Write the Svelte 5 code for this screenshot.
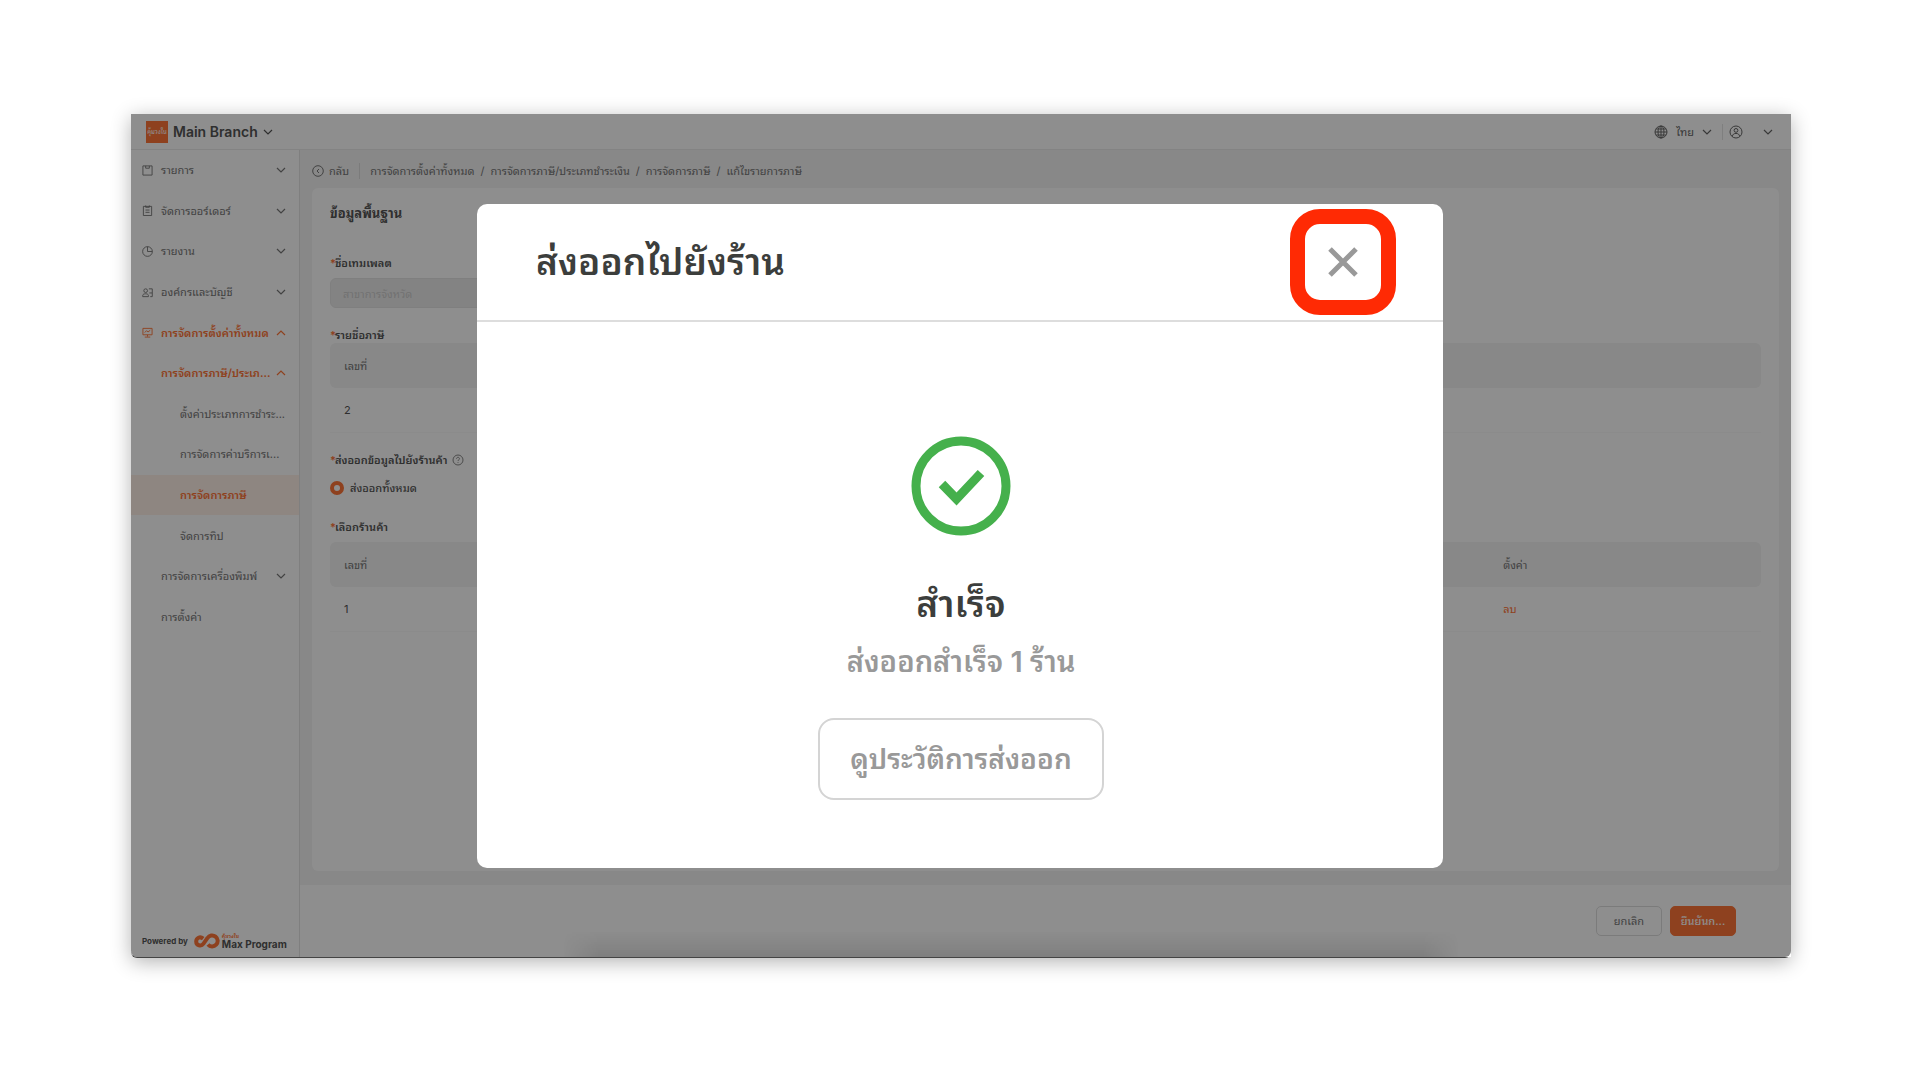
<script lang="ts">
  type MenuItem = {
    label: string;
    level: number;
    icon?: string;
    arrow?: 'up' | 'down';
    active?: boolean;
    selected?: boolean;
  };

  const menu: MenuItem[] = [
    { label: 'รายการ', level: 0, icon: 'bag', arrow: 'down' },
    { label: 'จัดการออร์เดอร์', level: 0, icon: 'order', arrow: 'down' },
    { label: 'รายงาน', level: 0, icon: 'report', arrow: 'down' },
    { label: 'องค์กรและบัญชี', level: 0, icon: 'people', arrow: 'down' },
    { label: 'การจัดการตั้งค่าทั้งหมด', level: 0, icon: 'board', arrow: 'up', active: true },
    { label: 'การจัดการภาษี/ประเภ...', level: 1, arrow: 'up', active: true },
    { label: 'ตั้งค่าประเภทการชำระ...', level: 2 },
    { label: 'การจัดการค่าบริการเ...', level: 2 },
    { label: 'การจัดการภาษี', level: 2, active: true, selected: true },
    { label: 'จัดการทิป', level: 2 },
    { label: 'การจัดการเครื่องพิมพ์', level: 1, arrow: 'down' },
    { label: 'การตั้งค่า', level: 1 }
  ];

  const crumbs = ['การจัดการตั้งค่าทั้งหมด', 'การจัดการภาษี/ประเภทชำระเงิน', 'การจัดการภาษี', 'แก้ไขรายการภาษี'];

  let scope = 'all';
</script>

{#snippet chevron(dir: string)}
  <svg class="chevron" class:up={dir === 'up'} viewBox="0 0 10 10" aria-hidden="true">
    <path d="M1 3l4 4 4-4" />
  </svg>
{/snippet}

<div class="page">
  <div class="window">
    <header class="topbar">
      <button class="branch">
        <span class="logo">คุ้มวงใน</span>
        Main Branch
        {@render chevron('down')}
      </button>
      <div class="account">
        <button class="lang">
          <svg viewBox="0 0 14 14" aria-hidden="true">
            <circle cx="7" cy="7" r="6" />
            <ellipse cx="7" cy="7" rx="3" ry="6" />
            <path d="M1 7h12M7 1v12M2 4h10M2 10h10" />
          </svg>
          ไทย
          {@render chevron('down')}
        </button>
        <button class="user" aria-label="บัญชี">
          <svg viewBox="0 0 14 14" aria-hidden="true">
            <circle cx="7" cy="7" r="6" />
            <circle cx="7" cy="5.4" r="1.9" />
            <path d="M3.4 11.4c0-4 7.2-4 7.2 0" />
          </svg>
          {@render chevron('down')}
        </button>
      </div>
    </header>

    <div class="columns">
      <aside class="sidebar">
        <nav>
          {#each menu as item}
            <a href="#menu" class="item level-{item.level}" class:active={item.active} class:selected={item.selected}>
              {#if item.icon}
                <svg class="menu-icon" viewBox="0 0 12 12" aria-hidden="true">
                  {#if item.icon === 'bag'}
                    <path d="M1 1h10v10H1zM4 1v2.500h4V1" />
                  {:else if item.icon === 'order'}
                    <path d="M1.500 1.500h9v10h-9zM4 .5v2h4v-2M3.800 5.500h4.400M3.800 8h4.400" />
                  {:else if item.icon === 'report'}
                    <circle cx="6" cy="6" r="5.300" />
                    <path d="M6 .7V6h5.300" />
                  {:else if item.icon === 'people'}
                    <circle cx="4" cy="4" r="2" />
                    <path d="M.8 10.500V9.200C.8 6.800 7 6.800 7 9.200v1.300zM7.500 2h3.700v8.500H9M8 6.500h3" />
                  {:else}
                    <path d="M1 1.500h10v7H1zM3 6l2-2 1.500 1.500L9 3.500M6 8.500v2M3 11h6" />
                  {/if}
                </svg>
              {/if}
              <span class="label">{item.label}</span>
              {#if item.arrow}{@render chevron(item.arrow)}{/if}
            </a>
          {/each}
        </nav>
        <div class="powered">
          <span>Powered by</span>
          <svg class="infinity" viewBox="0 0 26 16" aria-hidden="true">
            <path d="M9.200 5.600C6 3 2.200 5 2.200 8.400c0 4.200 5 5.300 7.300 2.200L13.500 5a5.500 5.500 0 1 1 .5 6.500" />
          </svg>
          <span class="brand"><small>คุ้มวงใน</small>Max Program</span>
        </div>
      </aside>

      <div class="content">
        <nav class="crumbs">
          <a href="#back" class="back">
            <svg viewBox="0 0 12 12" aria-hidden="true">
              <circle cx="6" cy="6" r="5.300" />
              <path d="M7 4L5 6l2 2" />
            </svg>
            กลับ
          </a>
          {#each crumbs as crumb, i}
            {#if i > 0}<span>/</span>{/if}
            <a href="#crumb">{crumb}</a>
          {/each}
        </nav>

        <main class="card">
          <h2>ข้อมูลพื้นฐาน</h2>

          <label class="field" for="template">ชื่อเทมเพลต</label>
          <input id="template" type="text" value="สาขาการจังหวัด" disabled />

          <p class="field taxes">รายชื่อภาษี</p>
          <table>
            <thead><tr><th>เลขที่</th></tr></thead>
            <tbody><tr><td>2</td></tr></tbody>
          </table>

          <p class="field export">
            ส่งออกข้อมูลไปยังร้านค้า
            <svg viewBox="0 0 12 12" aria-hidden="true">
              <circle cx="6" cy="6" r="5" />
              <path d="M4.500 4.800c0-2 3-2 3 0 0 1-1.500 1-1.500 2.200M6 8.200v.8" />
            </svg>
          </p>
          <label class="radio">
            <input type="radio" name="scope" value="all" bind:group={scope} />
            ส่งออกทั้งหมด
          </label>

          <p class="field shops">เลือกร้านค้า</p>
          <table>
            <thead><tr><th>เลขที่</th><th class="action">ตั้งค่า</th></tr></thead>
            <tbody><tr><td>1</td><td><a href="#remove">ลบ</a></td></tr></tbody>
          </table>
        </main>

        <footer>
          <button class="cancel">ยกเลิก</button>
          <button class="confirm">ยืนยันก...</button>
        </footer>
      </div>
    </div>

    <div class="overlay">
      <div class="modal" role="dialog" aria-modal="true" aria-labelledby="modal-title">
        <div class="modal-head">
          <h1 id="modal-title">ส่งออกไปยังร้าน</h1>
          <button class="close" aria-label="ปิด">
            <svg viewBox="0 0 30 30" aria-hidden="true"><path d="M2 2l26 26M28 2L2 28" /></svg>
          </button>
        </div>
        <div class="modal-body">
          <svg class="success" viewBox="0 0 100 100" aria-hidden="true">
            <circle cx="50" cy="50" r="45" />
            <path d="M31 48l14.500 15L70 37" />
          </svg>
          <h3>สำเร็จ</h3>
          <p>ส่งออกสำเร็จ 1 ร้าน</p>
          <button class="history">ดูประวัติการส่งออก</button>
        </div>
      </div>
    </div>
  </div>
</div>

<style>
  :global(body) {
    margin: 0;
    background: #fff;
  }

  .page {
    box-sizing: border-box;
    min-height: 100vh;
    padding: 114px 129px 122px 131px;
  }

  .window {
    position: relative;
    display: flex;
    flex-direction: column;
    box-sizing: border-box;
    min-height: calc(100vh - 236px);
    border-bottom: 1px solid #444;
    border-radius: 0 0 6px 6px;
    background: #fff;
    box-shadow: 0 4px 20px rgba(0, 0, 0, 0.3);
    color: #777;
    font-family: Inter, 'Noto Sans Thai Looped', Loma, Garuda, 'Noto Sans Thai', 'Noto Sans', sans-serif;
    font-size: 11px;
    line-height: 16px;
  }

  button,
  input {
    font: inherit;
    color: inherit;
  }

  button {
    padding: 0;
    border: 0;
    background: none;
  }

  a {
    color: inherit;
    text-decoration: none;
  }

  svg {
    flex: none;
    fill: none;
    stroke: currentColor;
  }

  h1,
  h2,
  h3,
  p {
    margin: 0;
  }

  .chevron {
    width: 10px;
    height: 10px;
    stroke-width: 1.2;
  }

  .chevron.up {
    transform: rotate(180deg);
  }

  .topbar {
    display: flex;
    align-items: center;
    justify-content: space-between;
    height: 35px;
    padding: 0 18px 0 15px;
    border-bottom: 1px solid #ececec;
    color: #666;
  }

  .branch {
    display: flex;
    align-items: center;
    gap: 5px;
    color: #555;
    font-size: 14px;
    font-weight: 600;
  }

  .logo {
    display: grid;
    width: 22px;
    height: 22px;
    place-items: center;
    overflow: hidden;
    background: #ff7638;
    color: #fff;
    font-size: 6px;
    font-weight: 400;
  }

  .account,
  .lang,
  .user {
    display: flex;
    align-items: center;
  }

  .account svg:not(.chevron) {
    width: 14px;
    height: 14px;
  }

  .lang {
    gap: 8px;
    padding-right: 10px;
    border-right: 1px solid #e4e4e4;
  }

  .user {
    gap: 20px;
    padding-left: 6px;
  }

  .columns {
    display: flex;
    flex: 1;
  }

  .sidebar {
    display: flex;
    flex: none;
    flex-direction: column;
    justify-content: space-between;
    width: 168px;
    border-right: 1px solid #e4e4e4;
  }

  .sidebar nav {
    display: grid;
    grid-template-columns: minmax(0, 1fr);
    grid-auto-rows: 1fr;
    height: 487px;
  }

  .item {
    display: flex;
    align-items: center;
    gap: 8px;
    padding: 0 13px 0 11px;
    white-space: nowrap;
  }

  .item.level-1 {
    padding-left: 30px;
  }

  .item.level-2 {
    padding-right: 0;
    padding-left: 49px;
  }

  .item.active {
    color: #ff7638;
    font-weight: 600;
  }

  .item.selected {
    background: #fff0e8;
  }

  .menu-icon {
    width: 11px;
    height: 11px;
  }

  .label {
    flex: 1;
    min-width: 0;
  }

  .powered {
    display: flex;
    align-items: center;
    gap: 6px;
    padding: 0 8px 8px 11px;
    color: #555;
    font-size: 8px;
    font-weight: 700;
    white-space: nowrap;
  }

  .infinity {
    width: 26px;
    height: 16px;
    color: #ff7638;
    stroke-width: 4;
  }

  .brand {
    display: flex;
    flex-direction: column;
    margin-left: -4px;
    font-size: 10px;
    line-height: 10px;
  }

  .brand small {
    color: #ff7638;
    font-size: 5px;
    line-height: 5px;
  }

  .content {
    display: flex;
    flex: 1;
    flex-direction: column;
    min-width: 0;
    background: #f4f4f4;
  }

  .crumbs {
    display: flex;
    align-items: center;
    gap: 6px;
    box-sizing: border-box;
    height: 38px;
    padding: 4px 12px 0;
  }

  .back {
    display: flex;
    align-items: center;
    gap: 5px;
    margin-right: 4px;
    padding-right: 10px;
    border-right: 1px solid #ddd;
  }

  .back svg {
    width: 12px;
    height: 12px;
  }

  .card {
    flex: 1;
    margin: 0 12px 14px;
    padding: 16px 18px;
    border-radius: 6px;
    background: #fff;
  }

  h2 {
    color: #555;
    font-size: 13px;
    font-weight: 700;
    line-height: 18px;
  }

  .field {
    display: flex;
    align-items: center;
    gap: 4px;
    height: 16px;
    margin-top: 33px;
    color: #555;
    font-weight: 600;
  }

  .field::before {
    margin-right: -5px;
    color: #ff7638;
    content: '*';
  }

  .field svg {
    width: 12px;
    height: 12px;
    color: #888;
  }

  .card input[type='text'] {
    display: block;
    box-sizing: border-box;
    width: 40%;
    height: 30px;
    margin-top: 7px;
    padding: 0 12px;
    border: 1px solid #e4e4e4;
    border-radius: 6px;
    background: #ececec;
    color: #ccc;
  }

  .field.taxes {
    margin-top: 19px;
  }

  .field.export {
    margin-top: 19px;
  }

  .field.shops {
    margin: 23px 0 7px;
  }

  table {
    width: 100%;
    border-collapse: separate;
    border-spacing: 0;
  }

  th,
  td {
    box-sizing: border-box;
    height: 45px;
    padding: 0 14px;
    text-align: left;
  }

  th {
    background: #f4f4f4;
    font-weight: 400;
  }

  th:first-child {
    border-radius: 6px 0 0 6px;
  }

  th:last-child {
    border-radius: 0 6px 6px 0;
  }

  th:only-child {
    border-radius: 6px;
  }

  .action {
    width: 19%;
  }

  td {
    border-bottom: 1px solid #f9f9f9;
    color: #555;
  }

  td a {
    color: #ff7638;
  }

  .radio {
    display: flex;
    align-items: center;
    gap: 6px;
    height: 16px;
    margin-top: 12px;
    color: #555;
    font-weight: 500;
  }

  .radio input {
    width: 14px;
    height: 14px;
    margin: 0;
    border: 4px solid #ff7638;
    border-radius: 50%;
    appearance: none;
  }

  footer {
    display: flex;
    align-items: center;
    justify-content: flex-end;
    gap: 8px;
    height: 72px;
    padding: 0 55px;
    background: #fff;
  }

  .cancel,
  .confirm {
    box-sizing: border-box;
    width: 66px;
    height: 30px;
    border: 1px solid #ddd;
    border-radius: 5px;
  }

  .confirm {
    border-color: #ff7638;
    background: #ff7638;
    color: #fff;
    font-weight: 500;
  }

  .overlay {
    position: absolute;
    inset: 0;
    display: grid;
    place-items: center;
    padding-right: 2px;
    border-radius: 0 0 6px 6px;
    background: rgba(0, 0, 0, 0.443);
  }

  /* soft shade along the lower edge */
  .overlay::after {
    position: absolute;
    right: 20%;
    bottom: 0;
    left: 26%;
    height: 26px;
    background: linear-gradient(transparent, rgba(0, 0, 0, 0.1));
    mask-image: linear-gradient(90deg, transparent, #000 4%, #000 96%, transparent);
    content: '';
  }

  .modal {
    width: 966px;
    max-width: 100%;
    border-radius: 10px;
    background: #fff;
  }

  .modal-head {
    display: flex;
    align-items: center;
    justify-content: space-between;
    padding: 5px 47px 5px 59px;
    border-bottom: 2px solid #ddd;
  }

  h1,
  h3 {
    color: #3c3e3c;
    font-size: 37px;
    font-weight: 600;
    line-height: 48px;
  }

  .close {
    display: grid;
    box-sizing: border-box;
    width: 106px;
    height: 106px;
    place-items: center;
    border: 15px solid #ff2a04;
    border-radius: 30px;
    color: #999;
  }

  .close svg {
    width: 30px;
    height: 30px;
    stroke-width: 5;
  }

  .modal-body {
    display: flex;
    flex-direction: column;
    align-items: center;
    padding: 114px 20px 68px 22px;
    color: #999;
    font-size: 29px;
    font-weight: 600;
    line-height: 40px;
  }

  .success {
    width: 100px;
    height: 100px;
    color: #45b04c;
    stroke-width: 9;
  }

  h3 {
    margin-top: 44px;
  }

  .modal-body p {
    margin-top: 14px;
  }

  .history {
    margin-top: 36px;
    padding: 19px 30px;
    border: 2px solid #d4d4d4;
    border-radius: 16px;
    font-size: 28px;
  }
</style>
